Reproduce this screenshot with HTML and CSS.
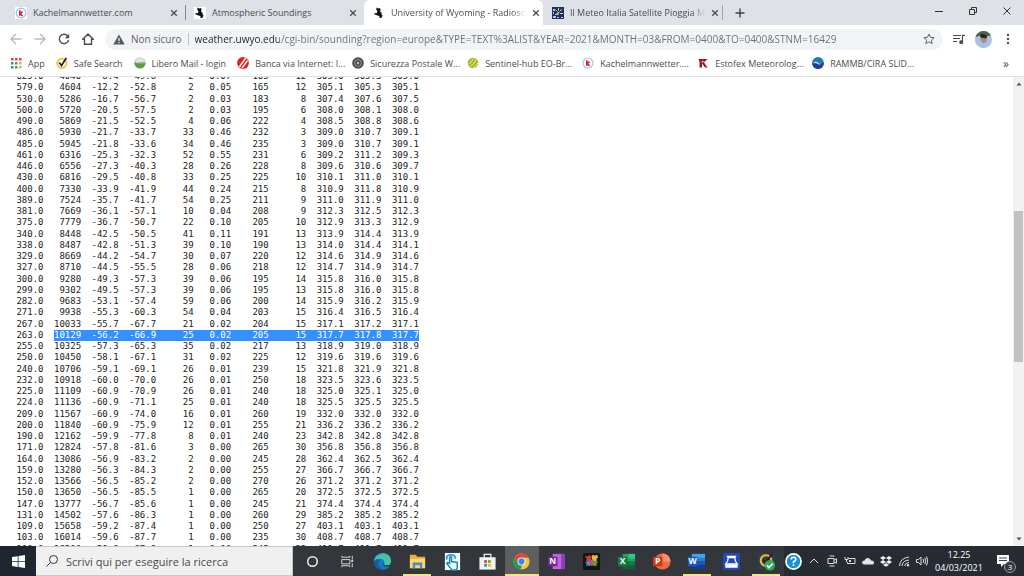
FILE: index.html
```html
<!DOCTYPE html>
<html lang="it">
<head>
    <meta charset="UTF-8">
    <meta name="viewport" content="width=device-width, initial-scale=1.0">
    <title>University of Wyoming - Radiosonde Data</title>
    <link rel="stylesheet" href="styles.css">
</head>
<body>
    <header class="browser">
        <div class="tab-strip">
            <div class="tab">
                <svg class="icon" viewBox="0 0 12 12"><rect width="12" height="12" fill="#fff"/><circle cx="6" cy="6" r="4.8" fill="none" stroke="#8cc4ec" stroke-width="1.2"/><path d="M4.8 3.2v5.6M7.6 4.6L5 6.6l2.6 2.2" fill="none" stroke="#d8202c" stroke-width="1.6"/></svg>
                <span class="title">Kachelmannwetter.com</span>
                <button class="close" aria-label="Chiudi"><svg viewBox="0 0 8 8"><path d="M1.2 1.2l5.6 5.6M6.8 1.2L1.2 6.8"/></svg></button>
            </div>
            <div class="tab line">
                <svg class="icon" viewBox="0 0 12 12"><rect width="12" height="12" fill="#fff"/><path d="M3.500.6l1.800 1L7 1l.6 2L7 4.800l1.700 1L8.400 7l1.200 1.800L8.200 11l-2-.3.3-1.700-2-.5-2.700-1L1.300 6l2.400.3.800-2-1.200-1.500z" fill="#111"/></svg>
                <span class="title">Atmospheric Soundings</span>
                <button class="close" aria-label="Chiudi"><svg viewBox="0 0 8 8"><path d="M1.2 1.2l5.6 5.6M6.8 1.2L1.2 6.8"/></svg></button>
            </div>
            <div class="tab active">
                <svg class="icon" viewBox="0 0 12 12"><path d="M3.500.6l1.800 1L7 1l.6 2L7 4.800l1.700 1L8.400 7l1.200 1.800L8.200 11l-2-.3.3-1.700-2-.5-2.700-1L1.300 6l2.400.3.800-2-1.200-1.500z" fill="#111"/></svg>
                <span class="title fade">University of Wyoming - Radioso</span>
                <button class="close" aria-label="Chiudi"><svg viewBox="0 0 8 8"><path d="M1.2 1.2l5.6 5.6M6.8 1.2L1.2 6.8"/></svg></button>
            </div>
            <div class="tab">
                <svg class="icon" viewBox="0 0 12 12"><rect width="12" height="12" fill="#1d3068"/><path d="M1 2h2v2H1zM1 5h1v2H1zM3 7h2v1H3zM1 9h3v2H1zM5 10h2v1H5zM9 10h2v1H9z" fill="#b9c6e4"/><path d="M6.500 1v2.600M3.500 2.500l2 2M9.800 2l-2 2.400M11 6.500H8" stroke="#e9d25a"/><path d="M4.500 7.500q0-3 3.500-2.500-2 .5-1.500 3z" fill="#f2df6a"/></svg>
                <span class="title fade">Il Meteo Italia Satellite Pioggia M</span>
                <button class="close" aria-label="Chiudi"><svg viewBox="0 0 8 8"><path d="M1.2 1.2l5.6 5.6M6.8 1.2L1.2 6.8"/></svg></button>
            </div>
            <button class="new-tab" aria-label="Nuova scheda"><svg viewBox="0 0 10 10"><path d="M5 .5v9M.5 5h9"/></svg></button>
            <div class="window-buttons">
                <button aria-label="Riduci"><svg viewBox="0 0 10 10"><path d="M1 5.500h8"/></svg></button>
                <button aria-label="Ripristina"><svg viewBox="0 0 10 10"><path d="M1.500 3.500h5v5h-5zM3.500 3V1.500h5v5H7"/></svg></button>
                <button aria-label="Chiudi finestra"><svg viewBox="0 0 10 10"><path d="M1.500 1.500l7 7M8.500 1.500l-7 7"/></svg></button>
            </div>
        </div>

        <div class="toolbar">
            <button class="nav disabled" aria-label="Indietro"><svg viewBox="0 0 12 12"><path d="M11.500 6H1.200M6 1L1 6l5 5"/></svg></button>
            <button class="nav disabled" aria-label="Avanti"><svg viewBox="0 0 12 12"><path d="M.5 6h10.300M6 1l5 5-5 5"/></svg></button>
            <button class="nav" aria-label="Ricarica"><svg viewBox="0 0 12 12"><path d="M10 3.400A4.700 4.700 0 1 0 10.600 7"/><path d="M11.200.8v4.400H6.800z" fill="#4a4d51" stroke="none"/></svg></button>
            <button class="nav" aria-label="Home"><svg viewBox="0 0 12 12"><path d="M6 1L.8 6.300h1.700v5h7v-5h1.700z"/></svg></button>
            <div class="address">
                <svg class="warn" viewBox="0 0 12 11"><path d="M6 .5L11.700 10.500H.3z" fill="#54585c"/><path d="M6 4v3M6 8v1.300" stroke="#fff" stroke-width="1.200"/></svg>
                <span class="secure">Non sicuro</span>
                <input class="url" type="text" aria-label="Indirizzo" value="weather.uwyo.edu/cgi-bin/sounding?region=europe&amp;TYPE=TEXT%3ALIST&amp;YEAR=2021&amp;MONTH=03&amp;FROM=0400&amp;TO=0400&amp;STNM=16429">
                <button class="star" aria-label="Preferiti"><svg viewBox="0 0 12 12"><path d="M6 1l1.500 3.300 3.600.4-2.700 2.400.8 3.500L6 8.800l-3.200 1.800.8-3.500L.9 4.700l3.600-.4z"/></svg></button>
            </div>
            <button class="tool" aria-label="Media"><svg viewBox="0 0 12 12"><path d="M0 2.500h8M0 5.500h7M0 8.500h4M9.500 9V2.300H12"/><circle cx="8.200" cy="9.200" r="1.400" fill="#4a4d51"/></svg></button>
            <button class="avatar" aria-label="Profilo"><svg viewBox="0 0 16 16"><clipPath id="face"><circle cx="8" cy="8" r="8"/></clipPath><g clip-path="url(#face)"><rect width="16" height="16" fill="#a8c4dc"/><path d="M0 0h16v4l-5 1-6-1-5 2z" fill="#4c6446"/><path d="M5 5q3-3 6 0v5l-3 2-3-3z" fill="#b98876"/><path d="M4.500 4q3.500-3 7 1l-1 2-5-1z" fill="#26262e"/><path d="M0 10l5-1 3 3 4-3 4 2v5H0z" fill="#a4c2e6"/></g></svg></button>
            <button class="more" aria-label="Menu"><svg viewBox="0 0 4 12"><circle cx="2" cy="2" r="1.200"/><circle cx="2" cy="6" r="1.200"/><circle cx="2" cy="10" r="1.200"/></svg></button>
        </div>

        <nav class="bookmarks">
            <a href="#"><svg class="icon" viewBox="0 0 12 12"><path d="M1 1h2.500v2.500H1zM5 1h2.500v2.500H5zM9 1h2.500v2.500H9z" fill="#e0463c"/><path d="M1 5h2.500v2.500H1z" fill="#3b9b55"/><path d="M5 5h2.500v2.500H5z" fill="#4488e8"/><path d="M9 5h2.500v2.500H9z" fill="#e8b13a"/><path d="M1 9h2.500v2.500H1zM5 9h2.500v2.500H5z" fill="#3b9b55"/><path d="M9 9h2.500v2.500H9z" fill="#e8b13a"/></svg>App</a>
            <a href="#"><svg class="icon" viewBox="0 0 12 12"><circle cx="5.800" cy="6.300" r="4.600" fill="#fff" stroke="#f7c02c" stroke-width="1.800"/><path d="M3.200 5.500l2.300 3L10.300 1" fill="none" stroke="#222" stroke-width="1.700"/></svg>Safe Search</a>
            <a href="#"><svg class="icon" viewBox="0 0 12 12"><circle cx="6" cy="6" r="5.600" fill="#5d9d3a"/><path d="M.6 5Q2 .4 6 .4q5 .3 5.500 5Q7 8 .6 5z" fill="#dfe3df"/><path d="M3 4.500q4 2.500 8 .3-3 3.500-8-.3z" fill="#3e7a28"/></svg>Libero Mail - login</a>
            <a class="long" href="#"><svg class="icon" viewBox="0 0 12 12"><circle cx="6" cy="6" r="5.900" fill="#e2211c"/><path d="M2.300 10L8.700 1M5 11L10.500 3.500" stroke="#fff" stroke-width="1.300"/></svg>Banca via Internet: I...</a>
            <a class="long" href="#"><svg class="icon" viewBox="0 0 12 12"><circle cx="6" cy="6" r="5.800" fill="#4c4c4c"/><circle cx="6" cy="6" r="3.400" fill="none" stroke="#a8a8a8" stroke-width=".8"/><circle cx="6" cy="6" r="1.200" fill="#bbb"/></svg>Sicurezza Postale W...</a>
            <a class="long" href="#"><svg class="icon" viewBox="0 0 12 12"><circle cx="6" cy="6" r="5.300" fill="#a9b823"/><path d="M1.500 7Q4 6.500 6.500 1.500M3 9.500Q7 8 9.300 2.500M6 11q3-1.500 4.800-5" fill="none" stroke="#eef2bc" stroke-width=".9"/></svg>Sentinel-hub EO-Br...</a>
            <a class="long" href="#"><svg class="icon" viewBox="0 0 12 12"><circle cx="6" cy="6" r="5" fill="#fff" stroke="#94cdf4" stroke-width="1.200"/><path d="M4.800 3.200v5.600M7.600 4.600L5 6.600l2.600 2.200" fill="none" stroke="#d8202c" stroke-width="1.600"/></svg>Kachelmannwetter....</a>
            <a class="long" href="#"><svg class="icon" viewBox="0 0 12 12"><path d="M1.500 2h9L7 5.500l3.500 5H8L5 6.500v4H2.500V5z" fill="#a3161e"/><path d="M4.500 4h3L5 6z" fill="#e9bcbc"/></svg>Estofex Meteorolog...</a>
            <a class="long" href="#"><svg class="icon" viewBox="0 0 12 12"><circle cx="6" cy="6" r="5.900" fill="#2379b8"/><path d="M.1 6h11.800A5.900 5.900 0 0 1 .1 6z" fill="#243b93"/><path d="M1 6.500q2.500-3 5-.8t5-.2q-3 3-5.200 1.500T1 6.500z" fill="#dcecf8"/></svg>RAMMB/CIRA SLID...</a>
            <button class="overflow" aria-label="Altri preferiti">»</button>
        </nav>
    </header>

    <main class="page">
        <div class="listing">
            <table class="sounding"><tbody id="sounding"></tbody></table>
        </div>
        <div class="scrollbar">
            <svg viewBox="0 0 8 8"><path d="M1.500 5.500L4 2.500l2.500 3z"/></svg>
            <div class="track"><div class="thumb"></div></div>
            <svg viewBox="0 0 8 8"><path d="M1.500 2.500L4 5.500l2.500-3z"/></svg>
        </div>
    </main>

    <footer class="taskbar">
        <button class="start" aria-label="Start"><svg viewBox="0 0 13 13"><path d="M0 2l5.700-.8v5H0zM6.500 1L13 0v6.200H6.500zM0 6.900h5.700v5L0 11zM6.500 6.900H13V13l-6.500-.9z" fill="#fff"/></svg></button>
        <label class="search">
            <svg viewBox="0 0 14 14"><circle cx="8.500" cy="5.500" r="4"/><path d="M5.600 8.400L1.500 12.500"/></svg>
            <input type="text" placeholder="Scrivi qui per eseguire la ricerca" aria-label="Ricerca">
        </label>
        <div class="apps">
            <button aria-label="Cortana"><svg viewBox="0 0 20 20"><circle cx="10" cy="10" r="5" fill="none" stroke="#eee" stroke-width="1.600"/></svg></button>
            <button aria-label="Visualizzazione attività"><svg viewBox="0 0 20 20"><path d="M4 5.500V4m0 1.500h8.500V4M4 8h8.500v4.500H4zM4 16v-1.500h8.500V16M15 4v4M15 12v4" fill="none" stroke="#ddd"/><path d="M14 8.500h2v2h-2z" fill="#ddd"/></svg></button>
            <button aria-label="Edge"><svg viewBox="0 0 20 20"><circle cx="10" cy="10" r="9" fill="#1877c9"/><path d="M1 10C1.500-.5 18-2 19 9q.2 5-5 5c-2.500 0-3-1-2-2.500C13 7.500 5 4.500 1 10z" fill="#45c6a2"/><path d="M1 10C2 2 10-.5 15 3 8 2 3 4 1 10z" fill="#27a8dc"/><path d="M7 9c-3 4-.5 9 5.500 9.500C7 20 1 16 1 10q2.500-4 6-1z" fill="#155ba8"/><path d="M12 11.500q-1 2.500 2 2.500 3.500.2 5-2l-.8 2.500q-3 1.500-6 .5-3-1.500-.2-3.500z" fill="#303941"/></svg></button>
            <button class="open" aria-label="Esplora file"><svg viewBox="0 0 20 20"><path d="M2 3h6l2 2h8v12H2z" fill="#e8ae3a"/><path d="M2 7h16v10H2z" fill="#fbd66a"/><path d="M5 11h10v6h-2.500v-3h-5v3H5z" fill="#3f91d4"/></svg></button>
            <button aria-label="Assistente"><svg viewBox="0 0 20 20"><path d="M2 1h16v18H2z" fill="#f4f8fa"/><path d="M8 17l-4-5q0-2 3 0V6q1-2 2 0v4l6 1v6l-1 2H9z" fill="#fff" stroke="#168abd" stroke-width="1.600"/><path d="M4 8q-1-5 4-5t5 4" fill="none" stroke="#27a2cf" stroke-width="2"/></svg></button>
            <button aria-label="Microsoft Store"><svg viewBox="0 0 20 20"><path d="M6.500 6V2.500h7V6" fill="none" stroke="#eee" stroke-width="1.300"/><path d="M1.500 5.500h17V18.500h-17z" fill="#f4f4f4"/><path d="M6.500 8.500h3v3h-3z" fill="#e54b24"/><path d="M10.500 8.500h3v3h-3z" fill="#72ae18"/><path d="M6.500 12.500h3v3h-3z" fill="#1799db"/><path d="M10.500 12.500h3v3h-3z" fill="#f2b51b"/></svg></button>
            <button class="open current" aria-label="Chrome"><svg viewBox="0 0 20 20"><circle cx="10" cy="10" r="8.500" fill="#f4c62f"/><path d="M2.600 5.800A8.500 8.500 0 0 1 17.500 6H10L6 11.800z" fill="#dc4636"/><path d="M2.600 5.800L6.500 12l4 2-1.500 4.500A8.500 8.500 0 0 1 2.600 5.800z" fill="#249b54"/><circle cx="10" cy="10" r="4.200" fill="#fff"/><circle cx="10" cy="10" r="3.300" fill="#4384ec"/></svg></button>
            <button aria-label="OneNote"><svg viewBox="0 0 20 20"><path d="M6 2h12v16H6z" fill="#bd65dc"/><path d="M15 2h4v16h-4z" fill="#8f3bb2"/><rect x="1" y="5" width="10" height="10" fill="#7324a0"/><text x="6" y="13" class="letter">N</text></svg></button>
            <button aria-label="Foto"><svg viewBox="0 0 20 20"><rect x="1" y="1" width="18" height="18" rx="2" fill="#17130f"/><path d="M3 5l2-1 1 1 2-2 2 3-1 3-5 1 1-3z" fill="#d83a2b"/><path d="M10 4l2-1 1 1 3-1 1 3-2 1 1 2-5 1z" fill="#e6c12d"/><path d="M3 11l5-2 2 2-2 4-2-1-2 1 1-3z" fill="#3e9ad0"/><path d="M10 10l5-1 2 2-2 1 1 2-3 1-1-1-2 1z" fill="#58a43a"/><path d="M8 8h4v4l-2 3-2-3z" fill="#c94b81"/></svg></button>
            <button aria-label="Excel"><svg viewBox="0 0 20 20"><path d="M6 2h13v16H6z" fill="#23a366"/><path d="M12 2h7v5h-7z" fill="#35c481"/><path d="M6 10h13v8H6z" fill="#185c37"/><path d="M12 10h7v4h-7z" fill="#137a46"/><rect x="1" y="5" width="10" height="10" fill="#107c41"/><text x="6" y="13" class="letter">X</text></svg></button>
            <button aria-label="PowerPoint"><svg viewBox="0 0 20 20"><circle cx="11" cy="10" r="8.500" fill="#ed6c47"/><path d="M11 1.500a8.500 8.500 0 0 1 8.500 8.500H11z" fill="#ff8f6b"/><rect x="1" y="5" width="10" height="10" fill="#c43e1c"/><text x="6" y="13" class="letter">P</text></svg></button>
            <button class="open" aria-label="Word"><svg viewBox="0 0 20 20"><path d="M5 2h14v5H5z" fill="#41a5ee"/><path d="M5 6h14v4H5z" fill="#2b7cd3"/><path d="M5 10h14v4H5z" fill="#185abd"/><path d="M5 14h14v4H5z" fill="#103f91"/><rect x="1" y="5" width="10" height="10" fill="#185abd"/><text x="6" y="13" class="letter">W</text></svg></button>
            <button aria-label="Scanner"><svg viewBox="0 0 20 20"><rect x="1" y="1" width="18" height="18" rx="1.500" fill="#2349b8"/><path d="M5 4h10v1.500H5zM3.500 13h13v3.500h-13z" fill="#fff"/><path d="M6.500 6q0 4-2.500 6.500h12Q13.500 10 13.500 6z" fill="none" stroke="#fff" stroke-width="1.400"/></svg></button>
            <button class="open" aria-label="Norton"><svg viewBox="0 0 20 20"><path d="M1 1h18v18H1z" fill="#2e3f50"/><circle cx="9.500" cy="9" r="5.600" fill="none" stroke="#f4b62a" stroke-width="2.200"/><path d="M6 8l3 3 7-9" fill="none" stroke="#222" stroke-width="2"/><circle cx="13.500" cy="14" r="5.500" fill="#2fac55"/><path d="M10.500 14l2 2.300 4-4" fill="none" stroke="#fff" stroke-width="1.800"/></svg></button>
        </div>
        <div class="tray">
            <svg class="help" viewBox="0 0 18 18"><circle cx="9" cy="9" r="8" fill="#1792d2" stroke="#fff" stroke-width="1.800"/><path d="M6.500 7q0-2.500 2.500-2.500T11.500 7Q11.500 8.500 9 9.300v1.500M9 12v1.800" fill="none" stroke="#fff" stroke-width="1.700"/></svg>
            <svg viewBox="0 0 12 12"><path d="M2 8l4-4 4 4"/></svg>
            <svg viewBox="0 0 12 12"><path d="M3.500 1h5M3.500 11h5M2 3.500h6v5H2zM8 5l2.500-1.200v4.400L8 7"/></svg>
            <svg viewBox="0 0 12 12"><path d="M4.500 3.500H11v5H3.500V7M1 2v2.500h3V2M2.500 4.500V7"/><path d="M5 5h2v2H5z" fill="#ddd" stroke="none"/></svg>
            <svg viewBox="0 0 12 12"><path d="M2.500 9.500Q0 9.500 0 7.500 0 5.500 2.500 5.500 3.500 2.500 6 3t3 2.500Q12 5.500 12 7.700T9.500 9.500z" fill="#e6e6e6" stroke="none"/></svg>
            <svg viewBox="0 0 12 12"><path d="M3 1l3 2-3 2-3-2zM9 1l3 2-3 2-3-2zM3 5l3 2-3 2-3-2zM9 5l3 2-3 2-3-2zM6 8l3 2-3 1.800L3 10z" fill="#f2f2f2" stroke="none"/></svg>
            <svg viewBox="0 0 12 12"><path d="M1.500 11Q2 3 11 2M4 11q.5-5.500 7-6M6.500 11q.5-3 4.500-3.500"/><circle cx="10" cy="10.300" r="1.200" fill="#ddd" stroke="none"/></svg>
            <svg viewBox="0 0 12 12"><path d="M.5 4.500H2.500L5 2v8L2.500 7.500H.5zM7 4q1.500 2 0 4M8.800 2.800q2 3.200 0 6.400M10.500 1.500q2.500 4.500 0 9"/></svg>
            <div class="clock"><time>12.25</time><time>04/03/2021</time></div>
            <button class="notify" aria-label="Notifiche">
                <svg viewBox="0 0 14 14"><path d="M1 1h12v9H8l-3 3v-3H1z" fill="#fff"/><path d="M3 4h8M3 6.500h8" stroke="#444"/></svg>
                <span class="badge">3</span>
            </button>
        </div>
    </footer>
    <script src="script.js"></script>
</body>
</html>
```

FILE: styles.css
```css
* { box-sizing: border-box; }
body { margin: 0; height: 100vh; display: flex; flex-direction: column; overflow: hidden; background: #fff; color: #4a4d51; font-family: "Open Sans", "Noto Sans", sans-serif; font-size: 9px; }
button { padding: 0; border: none; background: none; font: inherit; color: inherit; display: flex; align-items: center; justify-content: center; }
svg { display: block; flex: none; }
input { min-width: 0; padding: 0; border: none; outline: none; background: none; font-family: inherit; }
.icon { width: 12px; height: 12px; }

/* tabs */
.tab-strip { display: flex; height: 25px; padding-left: 6px; background: #dee1e6; }
.tab { display: flex; align-items: center; gap: 6px; width: 179px; padding: 0 7px 0 9px; }
.tab .title { flex: 1; white-space: nowrap; }
.tab .fade { -webkit-mask-image: linear-gradient(to right, #000 90%, transparent); mask-image: linear-gradient(to right, #000 90%, transparent); }
.tab.line { background: linear-gradient(#85888c, #85888c) no-repeat left center / 1px 15px; }
.tab.active { background: #fff; border-radius: 6px 6px 0 0; }
.close svg { width: 8px; height: 8px; fill: none; stroke: #4a4d51; stroke-width: 1.3; }
.new-tab { width: 36px; background: linear-gradient(#a0a3a8, #a0a3a8) no-repeat left center / 1px 15px; }
.new-tab svg { width: 10px; height: 10px; stroke: #3c4043; stroke-width: 1.4; }
.window-buttons { display: flex; margin-left: auto; height: 21px; }
.window-buttons button { width: 34px; }
.window-buttons svg { width: 10px; height: 10px; fill: none; stroke: #333; }

/* toolbar */
.toolbar { display: flex; align-items: center; height: 28px; padding: 0 8px 0 4px; }
.nav { width: 24px; }
.nav svg { width: 12px; height: 12px; fill: none; stroke: #4a4d51; stroke-width: 1.4; }
.nav.disabled svg { stroke: #b8babd; }
.address { flex: 1; display: flex; align-items: center; height: 21px; margin-left: 5px; padding: 0 8px; border-radius: 11px; background: #f1f3f4; font-size: 10px; color: #5f6368; }
.warn { width: 12px; height: 11px; margin-right: 6px; }
.secure { padding-right: 6px; border-right: 1px solid #bdc1c6; margin-right: 6px; line-height: 12px; }
.url { flex: 1; font-size: 10px; color: transparent; background: linear-gradient(to right, #202124 84px, #6b6f73 84px); -webkit-background-clip: text; background-clip: text; }
.star svg { width: 12px; height: 12px; fill: none; stroke: #5f6368; }
.tool { width: 32px; }
.tool svg { width: 12px; height: 12px; fill: none; stroke: #4a4d51; stroke-width: 1.2; }
.avatar svg { width: 17px; height: 17px; }
.more { width: 16px; margin-left: 8px; }
.more svg { width: 4px; height: 12px; fill: #4a4d51; }

/* bookmarks */
.bookmarks { display: flex; align-items: center; height: 24px; padding: 0 10px 3px; border-bottom: 1px solid #dfe1e3; }
.bookmarks a { display: flex; align-items: center; gap: 6px; margin-right: 11px; color: inherit; text-decoration: none; white-space: nowrap; }
.bookmarks a.long { width: 104px; }
.overflow { margin-left: auto; width: 16px; font-size: 12px; }

/* page */
.page { flex: 1; min-height: 0; display: flex; justify-content: space-between; }
.listing { padding-left: 6px; overflow: hidden; }
.sounding { width: 413px; height: 484px; margin-top: -6px; border-collapse: collapse; table-layout: fixed; font-family: "DejaVu Sans Mono", monospace; font-size: 9px; line-height: 11px; color: #222; text-align: right; }
.sounding td { padding: 0; }
.sounding .selected { background: #3390ff; color: #fff; }
.sounding span.selected { display: inline-block; }
.scrollbar { display: flex; flex-direction: column; align-items: center; width: 11px; padding: 3px 0; background: #f1f1f1; }
.scrollbar svg { width: 8px; height: 8px; fill: #505050; }
.track { flex: 1; width: 9px; padding: 123px 0 173px; display: flex; }
.thumb { flex: 1; background: #c1c1c1; }

/* taskbar */
.taskbar { display: flex; height: 30px; background: #33363a; color: #fff; }
.start { width: 36px; background: #20262f; }
.start svg { width: 13px; height: 13px; }
.search { display: flex; align-items: center; gap: 7px; width: 257px; padding-left: 9px; border: 1px solid #c8c8c8; border-left: none; background: #f0f0f0; }
.search svg { width: 14px; height: 14px; fill: none; stroke: #333; }
.search input { flex: 1; font-size: 11px; }
.search input::placeholder { color: #4a4a4a; opacity: 1; }
.apps { flex: 1; display: flex; margin-left: 2px; }
.apps button { flex: 1; }
.apps .open { background: linear-gradient(#f3e96e, #f3e96e) no-repeat center bottom / 28px 2px; }
.apps .current { background-color: #5c5e60; background-size: 100% 2px; }
.apps svg { width: 19px; height: 19px; }
.letter { fill: #fff; font-size: 9px; font-weight: bold; text-anchor: middle; }
.tray { display: flex; align-items: center; gap: 6px; width: 240px; padding-left: 1px; background: #272c33; }
.tray > svg { width: 12px; height: 12px; fill: none; stroke: #ddd; }
.tray > .help { width: 17px; height: 17px; }
.clock { display: flex; flex-direction: column; align-items: center; width: 50px; line-height: 13px; }
.notify { position: relative; width: 26px; height: 24px; }
.notify svg { width: 14px; height: 14px; }
.badge { position: absolute; right: 0; bottom: 0; width: 12px; height: 12px; border: 1px solid #999; border-radius: 50%; background: #33383f; font-size: 8px; line-height: 10px; text-align: center; }
```

FILE: script.js
```js
// PRES HGHT TEMP DWPT RELH MIXR DRCT SKNT THTA THTE THTV
const listing = `
625.0 4040 -8.4 -49.8 2 0.07 165 12 305.0 305.3 305.0
579.0 4604 -12.2 -52.8 2 0.05 165 12 305.1 305.3 305.1
530.0 5286 -16.7 -56.7 2 0.03 183 8 307.4 307.6 307.5
500.0 5720 -20.5 -57.5 2 0.03 195 6 308.0 308.1 308.0
490.0 5869 -21.5 -52.5 4 0.06 222 4 308.5 308.8 308.6
486.0 5930 -21.7 -33.7 33 0.46 232 3 309.0 310.7 309.1
485.0 5945 -21.8 -33.6 34 0.46 235 3 309.0 310.7 309.1
461.0 6316 -25.3 -32.3 52 0.55 231 6 309.2 311.2 309.3
446.0 6556 -27.3 -40.3 28 0.26 228 8 309.6 310.6 309.7
430.0 6816 -29.5 -40.8 33 0.25 225 10 310.1 311.0 310.1
400.0 7330 -33.9 -41.9 44 0.24 215 8 310.9 311.8 310.9
389.0 7524 -35.7 -41.7 54 0.25 211 9 311.0 311.9 311.0
381.0 7669 -36.1 -57.1 10 0.04 208 9 312.3 312.5 312.3
375.0 7779 -36.7 -50.7 22 0.10 205 10 312.9 313.3 312.9
340.0 8448 -42.5 -50.5 41 0.11 191 13 313.9 314.4 313.9
338.0 8487 -42.8 -51.3 39 0.10 190 13 314.0 314.4 314.1
329.0 8669 -44.2 -54.7 30 0.07 220 12 314.6 314.9 314.6
327.0 8710 -44.5 -55.5 28 0.06 218 12 314.7 314.9 314.7
300.0 9280 -49.3 -57.3 39 0.06 195 14 315.8 316.0 315.8
299.0 9302 -49.5 -57.3 39 0.06 195 13 315.8 316.0 315.8
282.0 9683 -53.1 -57.4 59 0.06 200 14 315.9 316.2 315.9
271.0 9938 -55.3 -60.3 54 0.04 203 15 316.4 316.5 316.4
267.0 10033 -55.7 -67.7 21 0.02 204 15 317.1 317.2 317.1
263.0 10129 -56.2 -66.9 25 0.02 205 15 317.7 317.8 317.7
255.0 10325 -57.3 -65.3 35 0.02 217 13 318.9 319.0 318.9
250.0 10450 -58.1 -67.1 31 0.02 225 12 319.6 319.6 319.6
240.0 10706 -59.1 -69.1 26 0.01 239 15 321.8 321.9 321.8
232.0 10918 -60.0 -70.0 26 0.01 250 18 323.5 323.6 323.5
225.0 11109 -60.9 -70.9 26 0.01 240 18 325.0 325.1 325.0
224.0 11136 -60.9 -71.1 25 0.01 240 18 325.5 325.5 325.5
209.0 11567 -60.9 -74.0 16 0.01 260 19 332.0 332.0 332.0
200.0 11840 -60.9 -75.9 12 0.01 255 21 336.2 336.2 336.2
190.0 12162 -59.9 -77.8 8 0.01 240 23 342.8 342.8 342.8
171.0 12824 -57.8 -81.6 3 0.00 265 30 356.8 356.8 356.8
164.0 13086 -56.9 -83.2 2 0.00 245 28 362.4 362.5 362.4
159.0 13280 -56.3 -84.3 2 0.00 255 27 366.7 366.7 366.7
152.0 13566 -56.5 -85.2 2 0.00 270 26 371.2 371.2 371.2
150.0 13650 -56.5 -85.5 1 0.00 265 20 372.5 372.5 372.5
147.0 13777 -56.7 -85.6 1 0.00 245 21 374.4 374.4 374.4
131.0 14502 -57.6 -86.3 1 0.00 260 29 385.2 385.2 385.2
109.0 15658 -59.2 -87.4 1 0.00 250 27 403.1 403.1 403.1
103.0 16014 -59.6 -87.7 1 0.00 235 30 408.7 408.7 408.7
100.0 16200 -59.9 -87.9 1 0.00 245 32 411.7 411.7 411.7
`;

const selectedLevel = '263.0';
const body = document.getElementById('sounding');

listing.trim().split('\n').forEach(line => {
    const values = line.split(' ');
    const selected = values[0] === selectedLevel;
    const row = body.insertRow();
    values.forEach((value, i) => {
        const cell = row.insertCell();
        if (selected && i === 1) {
            // selection starts at the first digit of the height
            const span = document.createElement('span');
            span.className = 'selected';
            span.innerText = value;
            cell.appendChild(span);
            return;
        }
        cell.innerText = value;
        if (selected && i > 1) cell.className = 'selected';
    });
});
```
